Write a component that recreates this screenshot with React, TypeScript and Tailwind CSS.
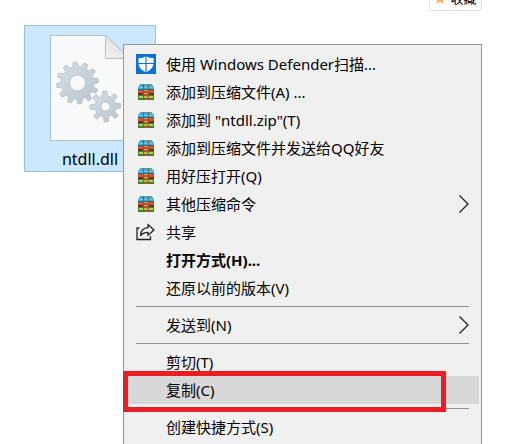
import type { ReactNode } from 'react';

type MenuEntry = {
  label: string;
  icon?: 'shield' | 'archive' | 'share';
  submenu?: boolean;
  bold?: boolean;
  active?: boolean;
};

// Each inner array is a block between two separators
const groups: MenuEntry[][] = [
  [
    { label: '使用 Windows Defender扫描...', icon: 'shield' },
    { label: '添加到压缩文件(A) ...', icon: 'archive' },
    { label: '添加到 "ntdll.zip"(T)', icon: 'archive' },
    { label: '添加到压缩文件并发送给QQ好友', icon: 'archive' },
    { label: '用好压打开(Q)', icon: 'archive' },
    { label: '其他压缩命令', icon: 'archive', submenu: true },
    { label: '共享', icon: 'share' },
    { label: '打开方式(H)...', bold: true },
    { label: '还原以前的版本(V)' },
  ],
  [{ label: '发送到(N)', submenu: true }],
  [{ label: '剪切(T)' }, { label: '复制(C)', active: true }],
  [{ label: '创建快捷方式(S)' }],
];

function ShieldIcon() {
  return (
    <svg viewBox="0 0 20 20" className="size-5" aria-hidden="true">
      <rect width="20" height="20" fill="#0a74d4" />
      <path d="M10 2c2 1.600 4.500 2.100 7.500 2.100V9c0 4-3 7.300-7.500 9.300C5.500 16.300 2.500 13 2.500 9V4.100C5.500 4.100 8 3.600 10 2Z" fill="#fff" />
      <path d="M10 2v17M2 9.500h16" stroke="#0a74d4" strokeWidth="1.200" />
    </svg>
  );
}

function ArchiveIcon() {
  return (
    <svg viewBox="0 0 16 16" className="size-4" aria-hidden="true">
      <path d="M2.500 0h11L16 3v3H0V3Z" fill="#37b0e6" />
      <path d="M2.500 0h11l1 1.500h-13Z" fill="#5a9fb8" />
      <path d="M1 3h14v1H1Z" fill="#62cbf5" />
      <path d="M0 5h16v1H0Z" fill="#22607f" />
      <path d="M0 6h16v3H0Z" fill="#d9532c" />
      <path d="M0 9h16v2H0Z" fill="#6a3020" />
      <path d="M0 11h16v5H0Z" fill="#4c7a30" />
      <path d="M1 12h14v2H1Z" fill="#9be04a" />
      <path d="M5 0h1v16H5ZM10 0h1v16h-1Z" fill="#8b5a2e" />
      <path d="M6 6h4v10H6Z" fill="#a8582c" />
      <path d="M6 6h4v1H6ZM6 9h4v1H6Z" fill="#e5a060" />
      <path d="M6 12h4v2H6Z" fill="#8fc544" />
    </svg>
  );
}

function ShareIcon() {
  return (
    <svg viewBox="0 0 20 18" className="h-[18px] w-5" fill="none" stroke="#222" strokeWidth="1.300" aria-hidden="true">
      <path d="M3.500 5H1v11.500h13.500V13" />
      <path d="M12 1.500 18 7l-6 5.200V9.300c-3.500 0-5.500.9-7.500 3.200C4.800 8 7.500 5 12 4.700Z" strokeLinejoin="round" />
    </svg>
  );
}

const icons: Record<string, ReactNode> = {
  shield: <ShieldIcon />,
  archive: <ArchiveIcon />,
  share: <ShareIcon />,
};

// Outline of a gear wheel with a round hole
function gearPath(cx: number, cy: number, outer: number, inner: number, hole: number, teeth: number, turn: number) {
  const step = (Math.PI * 2) / teeth;
  const pts: string[] = [];
  for (let i = 0; i < teeth; i++) {
    const a = i * step - Math.PI / 2 + turn;
    const corners = [
      [inner, -0.32],
      [outer, -0.18],
      [outer, 0.18],
      [inner, 0.32],
    ];
    corners.forEach(([r, o]) => {
      pts.push(`${(cx + r * Math.cos(a + o * step)).toFixed(2)} ${(cy + r * Math.sin(a + o * step)).toFixed(2)}`);
    });
  }
  return `M${pts.join('L')}Z M${cx - hole} ${cy}a${hole} ${hole} 0 1 0 ${hole * 2} 0a${hole} ${hole} 0 1 0 ${-hole * 2} 0Z`;
}

function DllIcon() {
  return (
    <svg viewBox="0 0 80 106" className="h-[106px] w-20" aria-hidden="true">
      <defs>
        <linearGradient id="gear" x1="0" y1="0" x2="1" y2="1">
          <stop offset="0" stopColor="#d6dfe4" />
          <stop offset="1" stopColor="#bac4cb" />
        </linearGradient>
        <linearGradient id="fold" x1="0" y1="1" x2="1" y2="0">
          <stop offset="0" stopColor="#f4f5f5" />
          <stop offset="1" stopColor="#d5d8da" />
        </linearGradient>
      </defs>
      <path d="M0.500 0.500h55l24 23v82h-79Z" fill="#f8f9fa" stroke="#b3bfc8" />
      <path d="M55.500 0.500v23h24Z" fill="url(#fold)" stroke="#b3bfc8" />
      <g fill="url(#gear)" fillRule="evenodd" stroke="#b4bec5" strokeWidth="0.800" strokeLinejoin="round">
        <path d={gearPath(27.5, 48, 21, 16.5, 8, 12, -0.12)} />
        <path d={gearPath(55.5, 71.5, 15.5, 10.5, 4.5, 8, -0.05)} />
      </g>
    </svg>
  );
}

function Chevron() {
  return (
    <svg viewBox="0 0 10 18" className="ml-auto h-[18px] w-2.5" fill="none" stroke="#222" strokeWidth="1.300" aria-hidden="true">
      <path d="M0.500 0.500 9 9l-8.500 8.500" />
    </svg>
  );
}

function MenuItem({ item }: { item: MenuEntry }) {
  return (
    <li role="none" className="relative">
      <button
        type="button"
        role="menuitem"
        aria-haspopup={item.submenu ? 'menu' : undefined}
        className={`flex h-7 w-full items-center pr-2.5 pl-2 text-left whitespace-nowrap hover:bg-[#d8d8d8] ${
          item.active ? 'bg-[#d8d8d8]' : ''
        } ${item.bold ? 'font-bold' : ''}`}
      >
        <span className="mr-2.5 flex w-5 shrink-0 justify-center">{item.icon && icons[item.icon]}</span>
        {item.label}
        {item.submenu && <Chevron />}
      </button>
      {/* red highlight frame */}
      {item.active && (
        <span className="pointer-events-none absolute -top-[5px] right-[33px] -bottom-2 -left-[5px] border-5 border-[#ec1c24]" />
      )}
    </li>
  );
}

export default function App() {
  return (
    <main className="relative h-screen overflow-hidden bg-white font-['Noto_Sans','Noto_Sans_CJK_SC',sans-serif] text-[15px] leading-5 text-black">
      <header className="-mt-4 flex justify-end pr-7">
        <button
          type="button"
          className="flex h-[27px] w-[53px] items-center justify-center gap-1 rounded-xs border border-[#e6dfe0] bg-white text-[13px]"
        >
          <svg viewBox="0 0 14 14" className="size-3" aria-hidden="true">
            <path d="m7 0 2.100 4.700 4.900.5-3.700 3.400 1.100 5.400L7 11.200 2.600 14l1.100-5.400L0 5.200l4.900-.5Z" fill="#f2b45c" />
          </svg>
          收藏
        </button>
      </header>

      <figure className="mt-3.5 ml-6 flex w-[132px] flex-col items-center border border-[#92c4ea] bg-[#cce8ff] pt-[9px] pb-0.5">
        <DllIcon />
        <figcaption className="mt-2 text-base leading-5">ntdll.dll</figcaption>
      </figure>

      <nav className="absolute top-11 right-7 bottom-0 left-[123px] border-x border-t border-[#979797] bg-[#f0f0f0] pt-[5px] pr-0.5 pl-1">
        <div role="menu" aria-label="ntdll.dll">
          {groups.map((group, i) => (
            <div key={i} role="group">
              {i > 0 && <hr className="my-1 mr-2.5 ml-2 border-[#919191]" />}
              <ul role="none">
                {group.map((item) => (
                  <MenuItem key={item.label} item={item} />
                ))}
              </ul>
            </div>
          ))}
        </div>
      </nav>
    </main>
  );
}
